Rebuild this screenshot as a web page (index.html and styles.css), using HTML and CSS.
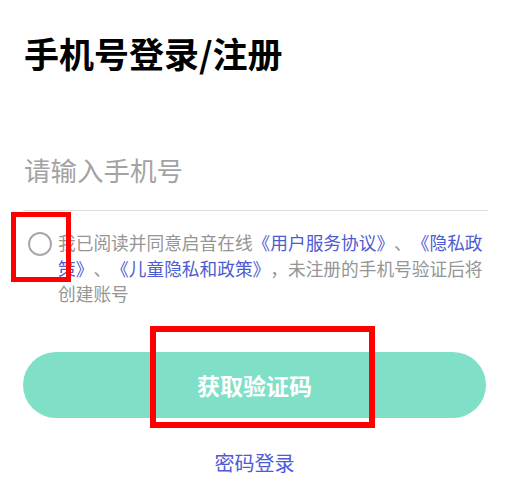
FILE: index.html
```html
<!DOCTYPE html>
<html lang="zh-CN">
<head>
<meta charset="utf-8">
<link rel="stylesheet" href="styles.css">
</head>
<body>
<main class="page">
  <h1 class="title">手机号登录/注册</h1>
  <div class="phone-field">
    <span class="placeholder">请输入手机号</span>
  </div>
  <div class="agree">
    <span class="radio"></span>
    <p class="agree-text">我已阅读并同意启音在线<a class="link">《用户服务协议》</a>、<a class="link">《隐私政策》</a>、<a class="link">《儿童隐私和政策》</a>，未注册的手机号验证后将创建账号</p>
  </div>
  <button class="btn">获取验证码</button>
  <div class="alt"><a class="alt-link">密码登录</a></div>
  <span class="mark mark-radio"></span>
  <span class="mark mark-btn"></span>
</main>
</body>
</html>
```

FILE: styles.css
```css
* { box-sizing: border-box; }
html, body { margin: 0; padding: 0; background: #fff; }
body {
  width: 520px;
  height: 490px;
  overflow: hidden;
  font-family: "Noto Sans CJK SC", "Noto Sans", sans-serif;
  text-spacing-trim: space-all;
  font-feature-settings: normal;
}
.page {
  position: relative;
  padding: 29px 32px 0 23px;
  height: 490px;
}
.title {
  margin: 0 0 0 1px;
  font-size: 35px;
  line-height: 48px;
  font-weight: 700;
  color: #000;
}
.phone-field {
  margin-top: 68px;
  height: 66px;
  border-bottom: 1px solid #dedede;
  padding: 6px 0 0 1px;
}
.placeholder {
  font-size: 26.5px;
  line-height: 38px;
  color: #a3a3a3;
}
.agree {
  display: flex;
  align-items: flex-start;
  margin-top: 19px;
}
.radio {
  flex: none;
  width: 24px;
  height: 24px;
  border: 2px solid #a8a8a8;
  border-radius: 50%;
  margin: 2px 0 0 5px;
}
.agree-text {
  margin: 0 0 0 6px;
  font-size: 17.7px;
  line-height: 25.5px;
  color: #959595;
}
.link { color: #4d5bd2; }
.btn {
  display: block;
  width: 463px;
  height: 66px;
  margin-top: 45px;
  border: 0;
  border-radius: 33px;
  background: #7fdfc7;
  color: #fff;
  font-family: inherit;
  font-size: 23px;
  font-weight: 700;
}
.alt {
  text-align: center;
  margin-top: 30px;
  width: 463px;
}
.alt-link {
  font-size: 20px;
  color: #4e5bd6;
}
.mark {
  position: absolute;
  border: 5px solid #f00;
}
.mark-radio {
  left: 11px;
  top: 212px;
  width: 60px;
  height: 70px;
}
.mark-btn {
  left: 150px;
  top: 326px;
  width: 225px;
  height: 102px;
  border-width: 6px;
}
```
